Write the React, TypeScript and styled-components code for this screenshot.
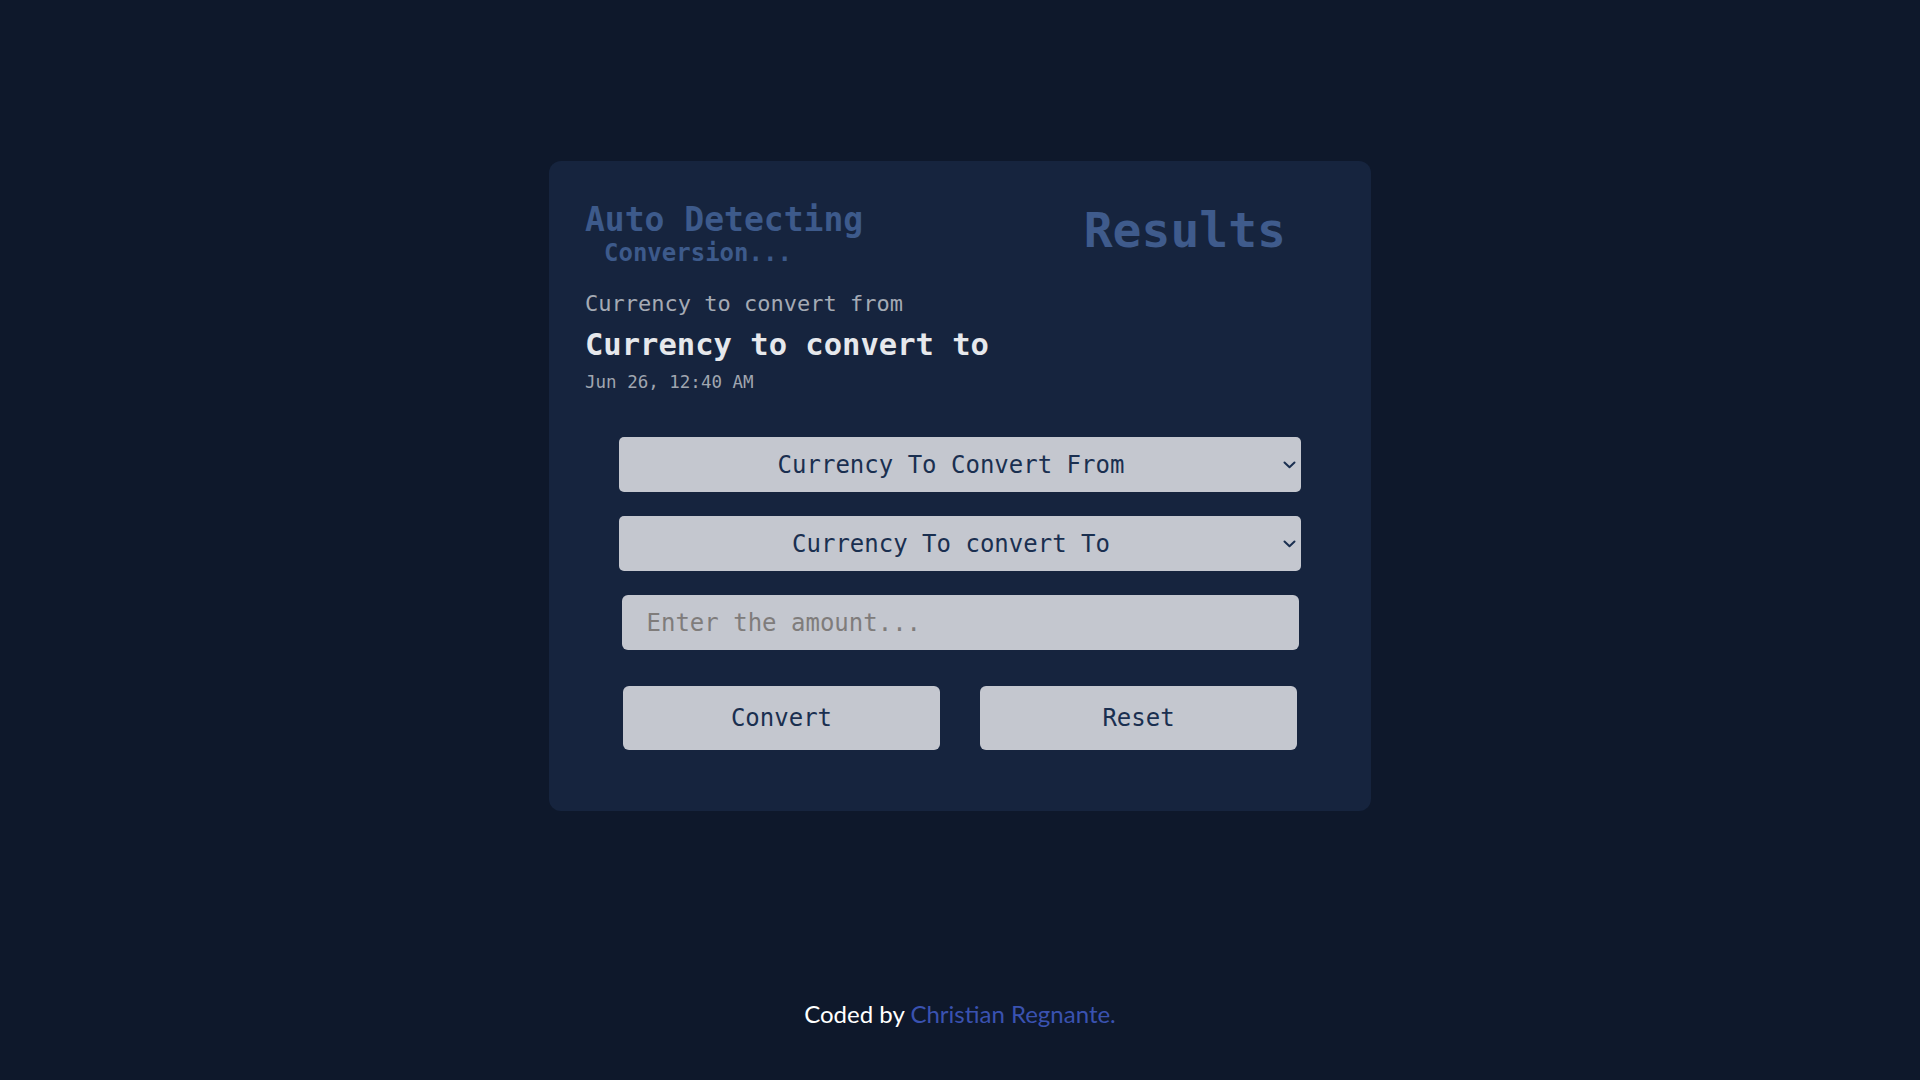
import React from "react";
import styled, { createGlobalStyle } from "styled-components";

const GlobalStyle = createGlobalStyle`
  html, body { margin: 0; padding: 0; background: #0e182b; }
  * { box-sizing: border-box; }
`;

const Page = styled.div`
  min-height: 100vh;
  display: flex;
  flex-direction: column;
  align-items: center;
  background: #0e182b;
  font-family: "DejaVu Sans Mono", "Liberation Mono", monospace;
`;

const Card = styled.main`
  margin-top: 161px;
  width: 822px;
  background: #16243e;
  border-radius: 12px;
  padding: 42px 36px 61px 36px;
  display: flex;
  flex-direction: column;
`;

const Header = styled.header`
  display: flex;
  justify-content: space-between;
  align-items: flex-start;
`;

const TitleBlock = styled.div`
  display: flex;
  flex-direction: column;
`;

const Title = styled.h1`
  margin: 0;
  font-size: 33px;
  line-height: 1;
  font-weight: 700;
  color: #3d5a8b;
`;

const Subtitle = styled.h2`
  margin: 4.5px 0 0 19px;
  font-size: 24px;
  line-height: 1;
  font-weight: 700;
  color: #3d5a8b;
`;

const Results = styled.h2`
  margin: 3px 49px 0 0;
  font-size: 48px;
  line-height: 1;
  font-weight: 700;
  color: #3f5b8c;
`;

const FromLabel = styled.p`
  margin: 28px 0 0 0;
  font-size: 22px;
  line-height: 1;
  color: #a4aab4;
`;

const ToLabel = styled.p`
  margin: 15.5px 0 0 0;
  font-size: 30.5px;
  line-height: 1;
  font-weight: 700;
  color: #e6e8ec;
`;

const DateLabel = styled.p`
  margin: 13px 0 0 0;
  font-size: 17.5px;
  line-height: 1;
  color: #a0a6b0;
`;

const Form = styled.form`
  margin-top: 46px;
  display: flex;
  flex-direction: column;
  align-items: center;
`;

const SelectWrap = styled.div`
  position: relative;
  width: 682px;
  height: 55px;
  margin-bottom: 24px;
`;

const Select = styled.select`
  appearance: none;
  -webkit-appearance: none;
  width: 100%;
  height: 100%;
  border: none;
  border-radius: 5px;
  background-color: #c4c7cf;
  color: #1a2f50;
  font-family: "DejaVu Sans Mono", "Liberation Mono", monospace;
  font-size: 24px;
  text-align: center;
  text-align-last: center;
  padding: 0 22px 0 4px;
  outline: none;
`;

const Chevron = styled.svg`
  position: absolute;
  right: 5px;
  top: 50%;
  width: 13px;
  height: 8px;
  margin-top: -4px;
  pointer-events: none;
`;

const AmountInput = styled.input`
  width: 677px;
  height: 55px;
  border: none;
  border-radius: 6px;
  background: #c4c7cf;
  color: #1a2f50;
  font-family: "DejaVu Sans Mono", "Liberation Mono", monospace;
  font-size: 24px;
  padding: 0 25px;
  outline: none;
  &::placeholder {
    color: #7f7c7b;
  }
`;

const ButtonRow = styled.div`
  margin-top: 36px;
  display: flex;
  gap: 40px;
`;

const Button = styled.button`
  width: 317px;
  height: 64px;
  border: none;
  border-radius: 6px;
  background: #c4c7cf;
  color: #1a2f50;
  font-family: "DejaVu Sans Mono", "Liberation Mono", monospace;
  font-size: 24px;
  cursor: pointer;
`;

const Footer = styled.footer`
  margin-top: auto;
  margin-bottom: 52px;
  font-family: Lato, "Noto Sans", sans-serif;
  font-size: 24px;
  color: #ffffff;
`;

const Link = styled.a`
  color: #3a52b0;
  text-decoration: none;
`;

function CurrencySelect({ label }: { label: string }) {
  return (
    <SelectWrap>
      <Select defaultValue="">
        <option value="">{label}</option>
      </Select>
      <Chevron viewBox="0 0 13 8" fill="none">
        <path d="M1.5 1.5 L6.5 6.2 L11.5 1.5" stroke="#1a2f50" strokeWidth="2" strokeLinecap="round" strokeLinejoin="round" />
      </Chevron>
    </SelectWrap>
  );
}

export default function App() {
  return (
    <>
      <GlobalStyle />
      <Page>
        <Card>
          <Header>
            <TitleBlock>
              <Title>Auto Detecting</Title>
              <Subtitle>Conversion...</Subtitle>
            </TitleBlock>
            <Results>Results</Results>
          </Header>
          <FromLabel>Currency to convert from</FromLabel>
          <ToLabel>Currency to convert to</ToLabel>
          <DateLabel>Jun 26, 12:40 AM</DateLabel>
          <Form onSubmit={(e) => e.preventDefault()}>
            <CurrencySelect label="Currency To Convert From" />
            <CurrencySelect label="Currency To convert To" />
            <AmountInput type="text" placeholder="Enter the amount..." />
            <ButtonRow>
              <Button type="button">Convert</Button>
              <Button type="button">Reset</Button>
            </ButtonRow>
          </Form>
        </Card>
        <Footer>
          Coded by <Link href="#">Christian Regnante.</Link>
        </Footer>
      </Page>
    </>
  );
}
